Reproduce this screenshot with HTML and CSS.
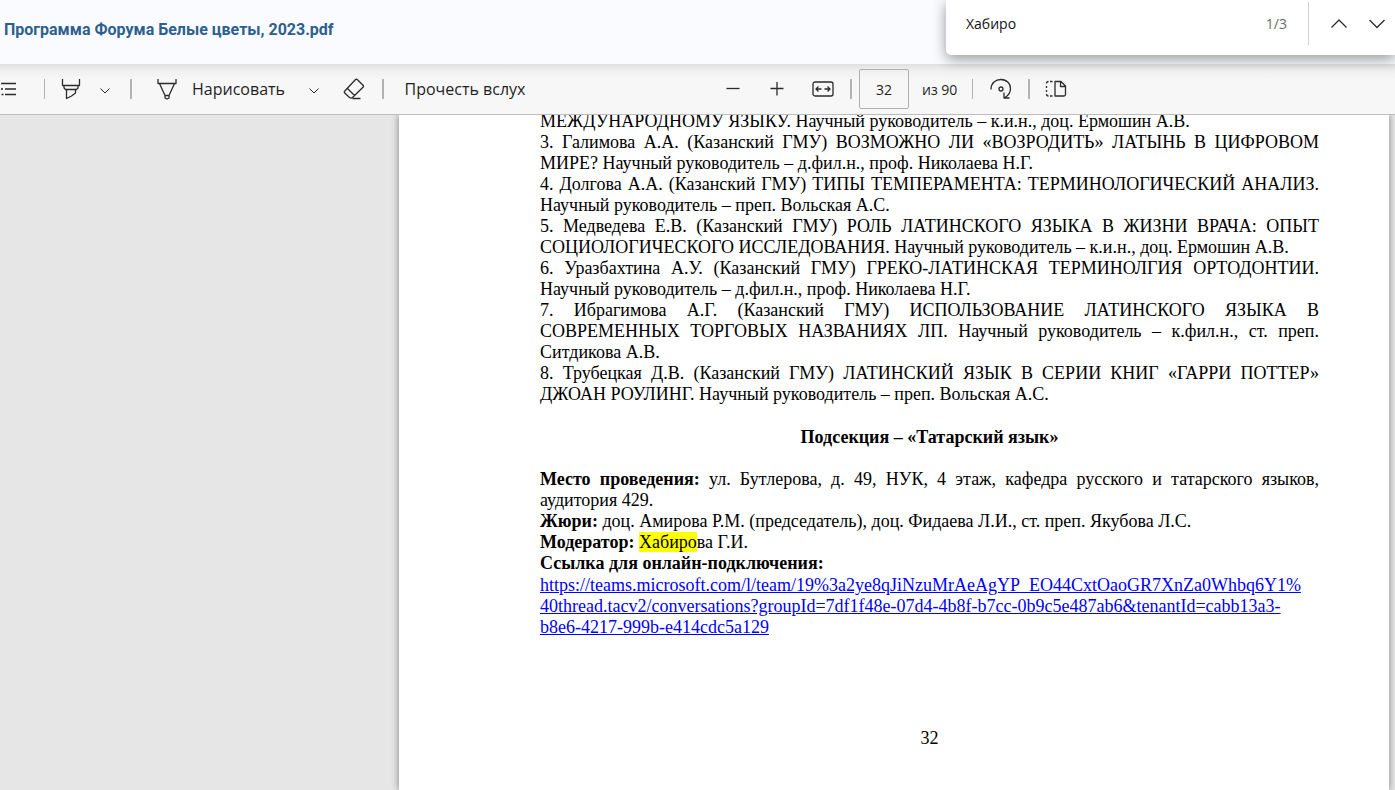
FILE: index.html
```
<!DOCTYPE html>
<html lang="ru">
<head>
<meta charset="utf-8">
<title>Программа Форума Белые цветы, 2023.pdf</title>
<link rel="stylesheet" href="styles.css">
</head>
<body>
<header class="titlebar"><h1 class="title">Программа Форума Белые цветы, 2023.pdf</h1></header>

<div class="toolbar" role="toolbar" aria-label="Панель PDF">
  <div class="group">
    <button class="tool contents" aria-label="Содержание"><svg width="18" height="18" viewBox="0 0 18 18"><path d="M1 3.500h15M5 9h11M5 14.500h11"/><path d="M1 9h2M1.500 14.500h2" /></svg></button>
    <span class="sep"></span>
    <button class="tool highlight" aria-label="Выделить"><svg width="20" height="22" viewBox="0 0 20 22"><path d="M1.500 1v6.500h17V1M3 7.500V10l1.500 1.500h11L17 10V7.500M5.500 11.500v9l5-2.500 4-3v-3.500"/></svg></button>
    <button class="tool menu" aria-label="Параметры выделения"><svg width="10" height="10" viewBox="0 0 10 10"><path class="thin" d="M.5 3.500 5 8l4.500-4.500"/></svg></button>
    <span class="sep wide"></span>
    <button class="tool draw"><svg width="20" height="22" viewBox="0 0 20 22"><path d="M1 1v4.500h18V1M2.500 5.500 8 17.500V20l2 1 2-1v-2.500l5.500-12M8 17.500h4"/></svg>Нарисовать</button>
    <button class="tool menu draw-menu" aria-label="Параметры рисования"><svg width="10" height="10" viewBox="0 0 10 10"><path class="thin" d="M.5 3.500 5 8l4.500-4.500"/></svg></button>
    <button class="tool eraser" aria-label="Стереть"><svg width="22" height="22" viewBox="0 0 22 22"><path d="M12.300 1.700Q13.500.8 14.500 1.800l5.500 5.500q1 1 0 2L9.500 19.500q-1.500 1-3 0L1.800 15q-1-1 0-2zM4.500 10.500l7 7M9.500 20.500h8"/></svg></button>
    <span class="sep wide"></span>
    <button class="tool read">Прочесть вслух</button>
  </div>
  <div class="group">
    <button class="tool" aria-label="Уменьшить"><svg width="14" height="14" viewBox="0 0 14 14"><path d="M.5 6.500h13"/></svg></button>
    <button class="tool" aria-label="Увеличить"><svg width="14" height="14" viewBox="0 0 14 14"><path d="M.5 6.500h13M7 0v13.500"/></svg></button>
    <button class="tool fit" aria-label="По ширине"><svg width="22" height="16" viewBox="0 0 22 16"><rect x="1" y="1" width="20" height="14" rx="2"/><path d="M9.500 8H4M6.500 5.500 4 8l2.500 2.500M12.500 8H18M15.500 5.500 18 8l-2.500 2.500"/></svg></button>
    <span class="sep wide"></span>
    <input class="page-no" id="page-no" type="text" value="32"><label class="total" for="page-no">из 90</label>
    <span class="sep"></span>
    <button class="tool rotate" aria-label="Повернуть"><svg width="22" height="22" viewBox="0 0 22 22"><path d="M1 11.500C1 5 5.500 1.500 11 1.500c6 0 9.500 4.500 9.500 9 0 4-2 7-5.500 9M14 14.500v5.500h5.500"/><circle cx="11" cy="11" r="2"/></svg></button>
    <span class="sep wide"></span>
    <button class="tool view" aria-label="Представление страницы"><svg width="22" height="18" viewBox="0 0 22 18"><path d="M10 1.500h6l4.500 4.500v8.500q0 1.500-1.500 1.500h-9zM15.500 1.500v5h5"/><path d="M7.500 1.500H5M3.500 1.500q-2 0-2 2M1.500 6v2M1.500 10v2M1.500 14q0 2 2 2M5 16h2.500"/></svg></button>
  </div>
</div>

<main class="viewer">
  <article class="page">
    <div class="text">
      <p>МЕЖДУНАРОДНОМУ ЯЗЫКУ. Научный руководитель – к.и.н., доц. Ермошин А.В.</p>
      <p>3. Галимова А.А. (Казанский ГМУ) ВОЗМОЖНО ЛИ «ВОЗРОДИТЬ» ЛАТЫНЬ В ЦИФРОВОМ МИРЕ? Научный руководитель – д.фил.н., проф. Николаева Н.Г.</p>
      <p>4. Долгова А.А. (Казанский ГМУ) ТИПЫ ТЕМПЕРАМЕНТА: ТЕРМИНОЛОГИЧЕСКИЙ АНАЛИЗ. Научный руководитель – преп. Вольская А.С.</p>
      <p>5. Медведева Е.В. (Казанский ГМУ) РОЛЬ ЛАТИНСКОГО ЯЗЫКА В ЖИЗНИ ВРАЧА: ОПЫТ СОЦИОЛОГИЧЕСКОГО ИССЛЕДОВАНИЯ. Научный руководитель – к.и.н., доц. Ермошин А.В.</p>
      <p>6. Уразбахтина А.У. (Казанский ГМУ) ГРЕКО-ЛАТИНСКАЯ ТЕРМИНОЛГИЯ ОРТОДОНТИИ. Научный руководитель – д.фил.н., проф. Николаева Н.Г.</p>
      <p>7. Ибрагимова А.Г. (Казанский ГМУ) ИСПОЛЬЗОВАНИЕ ЛАТИНСКОГО ЯЗЫКА В СОВРЕМЕННЫХ ТОРГОВЫХ НАЗВАНИЯХ ЛП. Научный руководитель – к.фил.н., ст. преп. Ситдикова А.В.</p>
      <p>8. Трубецкая Д.В. (Казанский ГМУ) ЛАТИНСКИЙ ЯЗЫК В СЕРИИ КНИГ «ГАРРИ ПОТТЕР» ДЖОАН РОУЛИНГ. Научный руководитель – преп. Вольская А.С.</p>
      <h2 class="section">Подсекция – «Татарский язык»</h2>
      <p><b>Место проведения:</b> ул. Бутлерова, д. 49, НУК, 4 этаж, кафедра русского и татарского языков, аудитория 429.</p>
      <p><b>Жюри:</b> доц. Амирова Р.М. (председатель), доц. Фидаева Л.И., ст. преп. Якубова Л.С.</p>
      <p><b>Модератор:</b> <mark>Хабиро</mark>ва Г.И.</p>
      <p><b>Ссылка для онлайн-подключения:</b></p>
      <p class="link"><a href="#meeting">https://teams.microsoft.com/l/team/19%3a2ye8qJiNzuMrAeAgYP_EO44CxtOaoGR7XnZa0Whbq6Y1%<br>40thread.tacv2/conversations?groupId=7df1f48e-07d4-4b8f-b7cc-0b9c5e487ab6&amp;tenantId=cabb13a3-<br>b8e6-4217-999b-e414cdc5a129</a></p>
      <footer class="folio">32</footer>
    </div>
  </article>
</main>

<form class="find" role="search">
  <input class="query" type="text" value="Хабиро" aria-label="Найти на странице">
  <output class="count">1/3</output>
  <span class="find-sep"></span>
  <button class="step" type="button" aria-label="Назад"><svg width="16" height="10" viewBox="0 0 16 10"><path d="M.5 8.500 8 1l7.500 7.500"/></svg></button>
  <button class="step" type="button" aria-label="Вперёд"><svg width="16" height="10" viewBox="0 0 16 10"><path d="M.5 1 8 8.500 15.500 1"/></svg></button>
</form>
</body>
</html>
```

FILE: styles.css
```
* { box-sizing: border-box; }

body {
  margin: 0;
  height: 100vh;
  display: flex;
  flex-direction: column;
  overflow: hidden;
  position: relative;
  background: #e6e6e6;
  font-family: "Open Sans", "Noto Sans", sans-serif;
  color: #1f1f1f;
}

button, input {
  font: inherit;
  color: inherit;
  border: 0;
  padding: 0;
  background: none;
}

svg {
  flex: none;
  fill: none;
  stroke: #2b2b2b;
  stroke-width: 1.3;
  stroke-linejoin: round;
}

.thin { stroke-width: 1; }

.titlebar {
  flex: none;
  height: 64px;
  padding: 0 4px 4px;
  display: flex;
  align-items: center;
  background: #fafbfe;
}

.title {
  margin: 0;
  font: 700 16px/20px Roboto, sans-serif;
  color: #2d5f8f;
}

.toolbar {
  flex: none;
  height: 51px;
  display: grid;
  grid-template-columns: 711fr 684fr;
  border-bottom: 1px solid #bdbdbd;
  background: linear-gradient(#e0e0e0, #f0f0f0 7px, #f7f7f7 16px);
  font-size: 16px;
}

.group {
  display: flex;
  align-items: center;
  white-space: nowrap;
}

.tool {
  flex: none;
  width: 44px;
  height: 36px;
  display: flex;
  align-items: center;
  justify-content: center;
}

.contents { width: 18px; margin-right: 26px; }
.highlight { margin-left: 4px; }
.menu { width: 24px; margin-right: 13px; }
.menu svg { margin-top: 2px; }
.draw { width: 130px; gap: 15px; margin-left: 24px; }
.draw-menu { margin: 0 6px 0 16px; }
.eraser { margin-right: 6px; }
.read { width: 124px; margin-left: 19px; }

.sep {
  flex: none;
  width: 1px;
  height: 20px;
  background: #b3b3b3;
}

.wide { width: 2px; }

.fit { width: 48px; margin-right: 3px; }

.page-no {
  width: 50px;
  height: 40px;
  margin-left: 7px;
  border: 1px solid #b0b0b0;
  border-radius: 2px;
  text-align: center;
  font-size: 14px;
}

.total { margin: 0 15px 0 13px; font-size: 14px; }
.rotate { width: 55px; }
.view { width: 52px; }

.viewer {
  flex: 1;
  min-height: 0;
  display: flex;
  justify-content: flex-end;
  overflow: hidden;
  padding-right: 6px;
}

.page {
  width: 990px;
  flex: none;
  background: #fff;
  box-shadow: 0 0 7px rgba(0, 0, 0, .45);
}

.text {
  margin: -4px 70px 0 141px;
  font: 18px/21px "Liberation Serif", "Times New Roman", serif;
  color: #000;
  text-align: justify;
}

.text p { margin: 0; }

.section {
  margin: 22px 0 21px;
  font: inherit;
  font-weight: 700;
  text-align: center;
}

mark { background: #ff0; color: inherit; }

.text .link { margin-top: 1px; text-align: left; white-space: nowrap; }
.link a { color: #00f; }

.folio { margin-top: 90px; text-align: center; }

.find {
  position: absolute;
  top: 0;
  right: 0;
  width: 449px;
  height: 55px;
  padding: 0 0 8px 20px;
  display: flex;
  align-items: center;
  border-bottom-left-radius: 5px;
  background: #fff;
  box-shadow: 0 4px 14px rgba(0, 0, 0, .4);
  font-size: 14px;
}

.query { flex: 1; min-width: 0; color: #111; outline: 0; }
.count { color: #6b6b6b; margin-right: 21px; }
.find-sep { width: 1px; height: 43px; margin-right: 10px; background: #d0d0d0; }
.step { width: 40px; height: 36px; flex: none; display: flex; align-items: center; justify-content: center; }
.step:last-child { width: 36px; }
```
